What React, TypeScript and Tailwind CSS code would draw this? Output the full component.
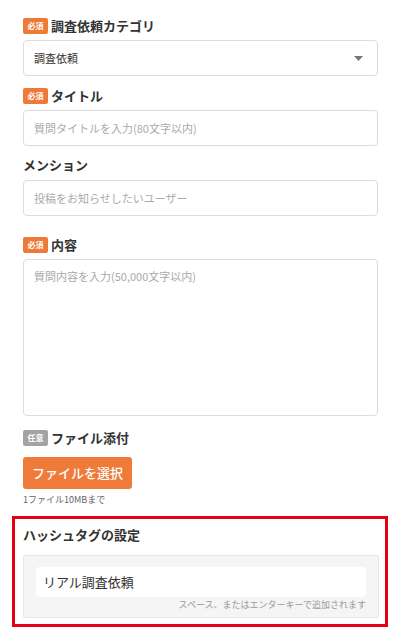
import { useState } from 'react';

function Badge({ kind }: { kind: 'req' | 'opt' }) {
  return (
    <span
      className={`mr-[3px] inline-flex h-[16px] w-[25px] items-center justify-center rounded-[2px] text-[8px] font-bold leading-none text-white ${
        kind === 'req' ? 'bg-[#ee7a38]' : 'bg-[#a3a3a3]'
      }`}
    >
      {kind === 'req' ? '必須' : '任意'}
    </span>
  );
}

function Label({ text, badge }: { text: string; badge?: 'req' | 'opt' }) {
  return (
    <div className="flex h-[20px] items-center text-[13px] font-bold leading-[20px] text-[#333]">
      {badge && <Badge kind={badge} />}
      <span>{text}</span>
    </div>
  );
}

export default function App() {
  const [category] = useState('調査依頼');
  const [title, setTitle] = useState('');
  const [mention, setMention] = useState('');
  const [body, setBody] = useState('');

  return (
    <div
      className="min-h-[631px] bg-white px-[23px] pt-[16px] text-[#333]"
      style={{ fontFamily: '"Noto Sans CJK JP", "Noto Sans", sans-serif' }}
    >
      <Label text="調査依頼カテゴリ" badge="req" />
      <div className="mt-[4px] flex h-[36px] w-[355px] items-center justify-between rounded-[4px] border border-[#dcdcdc] bg-white pl-[10px] pr-[14px]">
        <span className="text-[11px] text-[#333]">{category}</span>
        <svg width="9" height="5" viewBox="0 0 9 5">
          <path d="M0 0 H9 L4.5 5 Z" fill="#777" />
        </svg>
      </div>

      <div className="mt-[10px]">
        <Label text="タイトル" badge="req" />
      </div>
      <input
        value={title}
        onChange={(e) => setTitle(e.target.value)}
        placeholder="質問タイトルを入力(80文字以内)"
        className="mt-[4px] block h-[36px] w-[355px] rounded-[4px] border border-[#dcdcdc] px-[10px] text-[11px] outline-none placeholder:text-[#aaa]"
      />

      <div className="mt-[9px]">
        <Label text="メンション" />
      </div>
      <input
        value={mention}
        onChange={(e) => setMention(e.target.value)}
        placeholder="投稿をお知らせしたいユーザー"
        className="mt-[5px] block h-[36px] w-[355px] rounded-[4px] border border-[#dcdcdc] px-[10px] text-[11px] outline-none placeholder:text-[#aaa]"
      />

      <div className="mt-[19px]">
        <Label text="内容" badge="req" />
      </div>
      <textarea
        value={body}
        onChange={(e) => setBody(e.target.value)}
        placeholder="質問内容を入力(50,000文字以内)"
        className="mt-[4px] block h-[157px] w-[355px] resize-none rounded-[4px] border border-[#dcdcdc] px-[10px] pt-[8px] text-[11px] outline-none placeholder:text-[#aaa]"
      />

      <div className="mt-[12px]">
        <Label text="ファイル添付" badge="opt" />
      </div>
      <button className="mt-[9px] flex h-[32px] w-[109px] items-center justify-center rounded-[3px] bg-[#ef7b3a] text-[13px] font-medium text-white">
        ファイルを選択
      </button>
      <p className="mt-[5px] text-[9px] leading-[12px] text-[#666]">1ファイル10MBまで</p>

      <section className="-mx-[11px] mt-[10px] h-[111px] border-[3px] border-[#e60012] px-[8px] pt-[6px]">
        <h2 className="text-[13px] font-bold leading-[20px] text-[#333]">ハッシュタグの設定</h2>
        <div className="mt-[10px] h-[63px] w-[356px] rounded-[2px] border border-[#e6e6e6] bg-[#f5f5f5] px-[12px] pt-[11px]">
          <div className="flex h-[30px] items-center rounded-[4px] bg-white px-[7px] text-[13px] text-[#333]">
            リアル調査依頼
          </div>
          <p className="mt-[2px] text-right text-[9px] leading-[12px] text-[#999]">
            スペース、またはエンターキーで追加されます
          </p>
        </div>
      </section>
    </div>
  );
}
